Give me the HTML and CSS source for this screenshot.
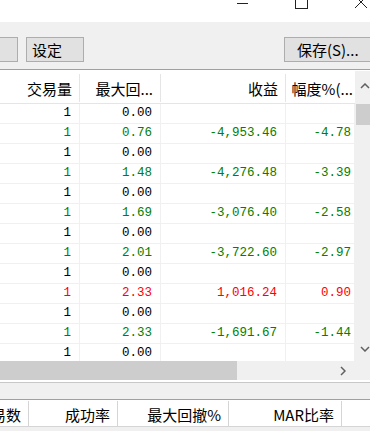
FILE: index.html
```html
<!DOCTYPE html>
<html lang="zh">
  <head>
    <meta charset="UTF-8" />
    <title>测试报告</title>
    <link rel="stylesheet" href="styles.css">
  </head>
  <body>
    <div class="titlebar">
      <svg class="winctl" width="135" height="22" viewBox="0 0 135 22">
        <line x1="2" y1="3.5" x2="13" y2="3.5" stroke="#222" stroke-width="1" />
        <rect x="60.5" y="-3.5" width="12" height="12" fill="none" stroke="#222" stroke-width="1" />
        <path d="M120 -4 L132 8 M132 -4 L120 8" stroke="#222" stroke-width="1" />
      </svg>
    </div>

    <div class="toolbar">
      <button class="btn btn-cut"></button>
      <button class="btn btn-set">设定</button>
      <button class="btn btn-save">保存(S)...</button>
    </div>
    <div class="rule"></div>

    <div class="grid">
      <div class="table">
        <div class="head">
          <div class="cell">交易量</div>
          <div class="cell">最大回...</div>
          <div class="cell">收益</div>
          <div class="cell last">幅度%(...</div>
        </div>
        <div class="row"><div class="cell">1</div><div class="cell">0.00</div><div class="cell"></div><div class="cell last"></div></div>
        <div class="row dn"><div class="cell">1</div><div class="cell">0.76</div><div class="cell">-4,953.46</div><div class="cell last">-4.78</div></div>
        <div class="row"><div class="cell">1</div><div class="cell">0.00</div><div class="cell"></div><div class="cell last"></div></div>
        <div class="row dn"><div class="cell">1</div><div class="cell">1.48</div><div class="cell">-4,276.48</div><div class="cell last">-3.39</div></div>
        <div class="row"><div class="cell">1</div><div class="cell">0.00</div><div class="cell"></div><div class="cell last"></div></div>
        <div class="row dn"><div class="cell">1</div><div class="cell">1.69</div><div class="cell">-3,076.40</div><div class="cell last">-2.58</div></div>
        <div class="row"><div class="cell">1</div><div class="cell">0.00</div><div class="cell"></div><div class="cell last"></div></div>
        <div class="row dn"><div class="cell">1</div><div class="cell">2.01</div><div class="cell">-3,722.60</div><div class="cell last">-2.97</div></div>
        <div class="row"><div class="cell">1</div><div class="cell">0.00</div><div class="cell"></div><div class="cell last"></div></div>
        <div class="row up"><div class="cell">1</div><div class="cell">2.33</div><div class="cell">1,016.24</div><div class="cell last">0.90</div></div>
        <div class="row"><div class="cell">1</div><div class="cell">0.00</div><div class="cell"></div><div class="cell last"></div></div>
        <div class="row dn"><div class="cell">1</div><div class="cell">2.33</div><div class="cell">-1,691.67</div><div class="cell last">-1.44</div></div>
        <div class="row"><div class="cell">1</div><div class="cell">0.00</div><div class="cell"></div><div class="cell last"></div></div>
      </div>

      <div class="vscroll">
        <div class="vbtn up-btn">
          <svg width="10" height="6" viewBox="0 0 10 6"><path d="M1 5 L5 1 L9 5" fill="none" stroke="#606060" stroke-width="1.5" /></svg>
        </div>
        <div class="vthumb"></div>
        <div class="vbtn down-btn">
          <svg width="10" height="6" viewBox="0 0 10 6"><path d="M1 1 L5 5 L9 1" fill="none" stroke="#606060" stroke-width="1.5" /></svg>
        </div>
      </div>
    </div>

    <div class="hscroll">
      <div class="hthumb"></div>
      <div class="hbtn">
        <svg width="6" height="10" viewBox="0 0 6 10"><path d="M1 1 L5 5 L1 9" fill="none" stroke="#606060" stroke-width="1.5" /></svg>
      </div>
      <div class="corner"></div>
    </div>

    <div class="band"></div>

    <div class="foot">
      <div class="fcell c0">交易数</div>
      <div class="fcell c1">成功率</div>
      <div class="fcell c2">最大回撤%</div>
      <div class="fcell c3">MAR比率</div>
      <div class="fcell c4"></div>
    </div>
    <div class="tail"></div>
  </body>
</html>
```

FILE: styles.css
```css
body {
  margin: 0;
  width: 370px;
  height: 431px;
  overflow: hidden;
  background-color: #fff;
  font-family: "Noto Sans CJK SC", sans-serif;
  font-size: 15px;
  color: #000;
}

.titlebar {
  height: 22px;
  display: flex;
  justify-content: flex-end;
}

.winctl {
  display: block;
}

.toolbar {
  height: 47px;
  box-sizing: border-box;
  padding-top: 15px;
  background-color: #f0f0f0;
  display: flex;
  align-items: flex-start;
}

.btn {
  flex: none;
  height: 25px;
  box-sizing: border-box;
  border: 1px solid #adadad;
  background-color: #e1e1e1;
  font-family: "Noto Sans CJK SC", sans-serif;
  font-size: 15px;
  line-height: 22px;
  color: #000;
  padding: 0;
  text-align: left;
}

.btn-cut {
  width: 31px;
  margin-left: -13px;
}

.btn-set {
  width: 58px;
  margin-left: 8px;
  padding-left: 5px;
}

.btn-save {
  width: 100px;
  margin-left: auto;
  margin-right: -14px;
  padding-left: 12px;
}

.rule {
  border-top: 1px solid #a0a0a0;
  border-bottom: 1px solid #fff;
}

.grid {
  display: flex;
  height: 290px;
}

.table {
  width: 355px;
  overflow: hidden;
  background-color: #fff;
}

.head,
.row {
  display: grid;
  grid-template-columns: 80px 81px 125px 69px;
}

.head {
  height: 33px;
  box-sizing: border-box;
  border-bottom: 1px solid #e5e5e5;
}

.head .cell {
  margin: 3px 0 1px;
  padding: 3px 7px 0 0;
  border-right: 1px solid #e5e5e5;
  text-align: right;
  line-height: 24px;
  white-space: nowrap;
  overflow: hidden;
}

.head .cell.last {
  border-right: none;
  padding-right: 2px;
}

.row {
  height: 20px;
  font-family: "Liberation Mono", monospace;
  font-size: 12.5px;
}

.row .cell {
  box-sizing: border-box;
  height: 20px;
  line-height: 19px;
  padding-right: 8px;
  border-right: 1px solid #f0f0f0;
  border-bottom: 1px solid #f0f0f0;
  text-align: right;
  white-space: nowrap;
}

.row .cell.last {
  padding-right: 3px;
}

.row.dn {
  color: #008000;
}

.row.up {
  color: #ff0000;
}

.vscroll {
  width: 15px;
  background-color: #f0f0f0;
  display: flex;
  flex-direction: column;
}

.vbtn {
  display: flex;
  align-items: center;
  padding-left: 5px;
}

.vbtn svg {
  display: block;
}

.up-btn {
  height: 29px;
}

.down-btn {
  margin-top: auto;
  height: 25px;
}

.vthumb {
  margin-top: 4px;
  height: 21px;
  margin-left: 1px;
  background-color: #cdcdcd;
}

.hscroll {
  height: 19px;
  display: flex;
  background-color: #f0f0f0;
}

.hthumb {
  width: 237px;
  background-color: #cdcdcd;
}

.hbtn {
  margin-left: auto;
  width: 25px;
  display: flex;
  align-items: center;
  justify-content: center;
}

.hbtn svg {
  display: block;
}

.corner {
  width: 15px;
  background-color: #f0f0f0;
}

.band {
  margin-top: 2px;
  height: 16px;
  background-color: #f0f0f0;
  border-top: 1px solid #c8c8c8;
  border-bottom: 1px solid #a0a0a0;
}

.foot {
  display: flex;
  height: 27px;
  box-sizing: border-box;
  border-top: 1px solid #fff;
  border-bottom: 1px solid #d5d5d5;
}

.fcell {
  flex: none;
  box-sizing: border-box;
  display: flex;
  justify-content: flex-end;
  align-items: center;
  padding: 2px 7px 0 0;
  border-right: 1px solid #d5d5d5;
  white-space: nowrap;
}

.c0 {
  width: 29px;
}

.c1 {
  width: 89px;
}

.c2 {
  width: 111px;
}

.c3 {
  width: 113px;
}

.c4 {
  flex: 1;
  border-right: none;
}

.tail {
  height: 10px;
  background-color: #f0f0f0;
}
```
